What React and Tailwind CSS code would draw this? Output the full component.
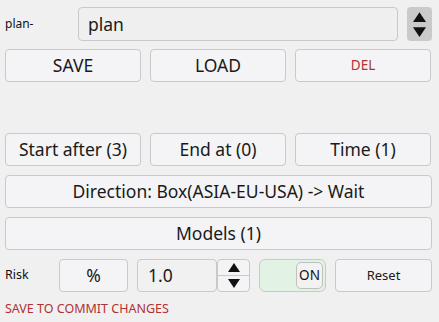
import React from "react";

const font = { fontFamily: '"Noto Sans", "Open Sans", Arial, sans-serif' };

function Btn({ children, className = "" }) {
  return (
    <div
      className={
        "flex items-center justify-center rounded-[4px] border border-[#c9c9cb] bg-[#f4f4f6] text-[#1a1a1a] " +
        className
      }
    >
      {children}
    </div>
  );
}

function Up({ w = 12, h = 9 }) {
  return (
    <svg width={w} height={h} viewBox="0 0 12 9">
      <path d="M6 0 L12 9 L0 9 Z" fill="#111" />
    </svg>
  );
}
function Down({ w = 12, h = 9 }) {
  return (
    <svg width={w} height={h} viewBox="0 0 12 9">
      <path d="M0 0 L12 0 L6 9 Z" fill="#111" />
    </svg>
  );
}

export default function App() {
  return (
    <div
      className="w-[439px] h-[322px] bg-[#f0f0f0] overflow-hidden pl-[5px] pt-[7px] relative"
      style={font}
    >
      {/* row 1 */}
      <div className="flex items-center h-[34px]">
        <div className="w-[73px] text-[12px] text-[#111]">plan-</div>
        <div className="w-[320px] h-[34px] rounded-[4px] border border-[#c9c9cb] bg-[#efefef] flex items-center pl-[9px] text-[17.5px] text-[#1a1a1a]">
          plan
        </div>
        <div className="ml-[9px] w-[25px] h-[34px] rounded-[4px] bg-[#cacaca] flex flex-col">
          <div className="flex-1 flex items-center justify-center pt-[2px]">
            <Up w={13} h={10} />
          </div>
          <div className="flex-1 flex items-center justify-center pb-[2px]">
            <Down w={13} h={10} />
          </div>
        </div>
      </div>

      {/* row 2 */}
      <div className="mt-[8px] grid grid-cols-3 gap-[9px] w-[426px] h-[33px]">
        <Btn className="text-[17.5px]">SAVE</Btn>
        <Btn className="text-[17.5px]">LOAD</Btn>
        <Btn className="text-[13.5px]">
          <span className="text-[#b03232]">DEL</span>
        </Btn>
      </div>

      {/* row 3 */}
      <div className="mt-[51px] grid grid-cols-3 gap-[9px] w-[426px] h-[33px]">
        <Btn className="text-[17.5px]">Start after (3)</Btn>
        <Btn className="text-[17.5px]">End at (0)</Btn>
        <Btn className="text-[17.5px]">Time (1)</Btn>
      </div>

      <Btn className="mt-[9px] w-[427px] h-[33px] text-[17.5px]">
        Direction: Box(ASIA-EU-USA) -&gt; Wait
      </Btn>
      <Btn className="mt-[9px] w-[427px] h-[33px] text-[17.5px]">Models (1)</Btn>

      {/* row 6 */}
      <div className="mt-[9px] flex items-center h-[33px]">
        <div className="w-[54px] text-[12.5px] text-[#111]">Risk</div>
        <Btn className="w-[69px] h-[33px] text-[17.5px]">%</Btn>
        <div className="ml-[9px] w-[80px] h-[33px] rounded-[4px] border border-[#c9c9cb] bg-[#f1f1f2] flex items-center pl-[10px] text-[17.5px] text-[#1a1a1a]">
          1.0
        </div>
        <div className="w-[33px] h-[33px] rounded-[4px] border border-[#c9c9cb] bg-[#f4f4f6] flex flex-col">
          <div className="flex-1 flex items-center justify-center border-b border-[#c9c9cb]">
            <Up />
          </div>
          <div className="flex-1 flex items-center justify-center">
            <Down />
          </div>
        </div>
        <div className="ml-[9px] w-[67px] h-[33px] rounded-[6px] border border-[#c9c9cb] bg-[#e3f3e3] flex items-center justify-end pr-[2px]">
          <div className="w-[27px] h-[27px] rounded-[5px] border border-[#c0c0c0] bg-[#f2f2f2] flex items-center justify-center text-[13.5px] text-[#111]">
            ON
          </div>
        </div>
        <Btn className="ml-[9px] w-[97px] h-[33px] text-[13px]">Reset</Btn>
      </div>

      <div className="mt-[11px] text-[12.5px] text-[#b03232] leading-none">
        SAVE TO COMMIT CHANGES
      </div>
    </div>
  );
}
